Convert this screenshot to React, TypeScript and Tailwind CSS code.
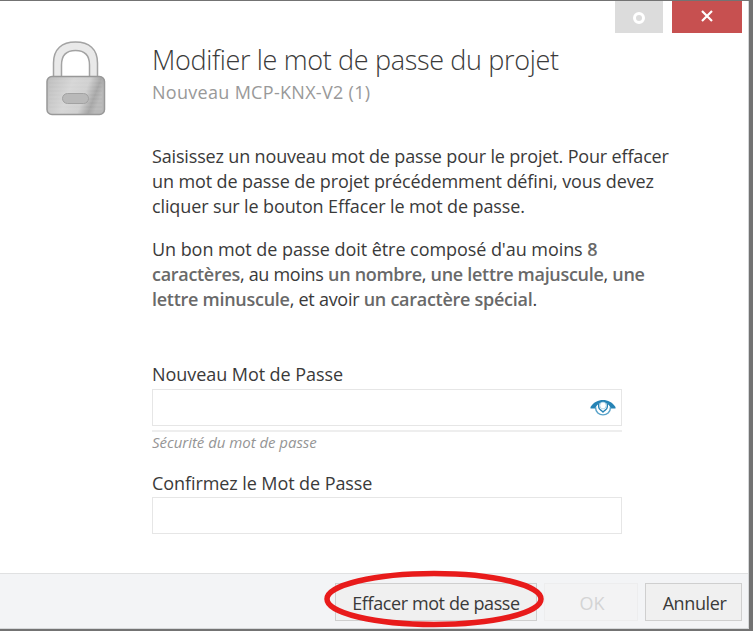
import type { ReactNode } from "react";

function Line({ className, children }: { className: string; children: ReactNode }) {
  return (
    <div className="whitespace-nowrap">
      <span className={className}>{children}</span>
    </div>
  );
}

function B({ children }: { children: ReactNode }) {
  return <span className="font-semibold text-[#696969]">{children}</span>;
}

function Padlock() {
  return (
    <svg width="62" height="78" viewBox="0 0 62 78" className="block">
      <defs>
        <linearGradient id="body" x1="0" y1="0" x2="1" y2="0.25">
          <stop offset="0" stopColor="#bcbcbc" />
          <stop offset="0.45" stopColor="#d6d6d6" />
          <stop offset="0.72" stopColor="#d0d0d0" />
          <stop offset="0.9" stopColor="#a6a6a6" />
          <stop offset="1" stopColor="#b8b8b8" />
        </linearGradient>
      </defs>
      <path
        d="M8.500 37V23C8.500 9 17 2 30.500 2S52.500 9 52.500 23V37H44.500V25C44.500 15 39 10.500 30.500 10.500S16.500 15 16.500 25V37Z"
        fill="#e9e9e9"
        stroke="#a3a3a3"
        strokeWidth="1.500"
      />
      <rect x="2" y="36.500" width="57.500" height="38" rx="5" fill="url(#body)" stroke="#989898" strokeWidth="1.500" />
      <path d="M4 41H57M4 45H57M4 49H57M4 53H57M4 57H57M4 61H57M4 65H57M4 69H57" stroke="#ffffff" strokeOpacity="0.12" />
      <rect x="17.500" y="53.500" width="26" height="10" rx="5" fill="#b9b9b9" stroke="#a2a2a2" />
    </svg>
  );
}

function Eye() {
  return (
    <svg width="26" height="17" viewBox="0 0 26 17" className="block">
      <path d="M0.500 9.500V8C4 3 8 1 13 1S22 3 25.500 8V9.500H20.500C20 7 18.500 5.500 17 5H9C7.500 5.500 6 7 5.500 9.500Z" fill="#2683b5" />
      <path d="M5.500 8C5.500 18.500 20.500 18.500 20.500 8" fill="none" stroke="#58a2c9" strokeWidth="1.400" />
      <path d="M8.700 4.500V8C8.700 10.500 11 11 13 13C15 11 17.300 10.500 17.300 8V4.500" fill="#fff" stroke="#2683b5" strokeWidth="1.400" />
      <ellipse cx="13" cy="6.500" rx="3.200" ry="3.400" fill="#fff" stroke="#a5cde2" strokeWidth="0.800" />
    </svg>
  );
}

export default function App() {
  return (
    <div className="h-[631px] w-[753px] overflow-hidden bg-[#737373] pt-px pr-1 pb-0.5 font-['Open_Sans','Noto_Sans',sans-serif] text-[#3a3a3a]">
      <div className="relative flex h-[628px] flex-col border-r border-b border-[#d5d7d9] bg-white">
        <div className="flex h-8 shrink-0 justify-end gap-[9px] pr-[6px]">
          <div className="flex w-12 items-center justify-center bg-[#dcdcdc]">
            <div className="mt-0.5 size-3 rounded-full border-3 border-white" />
          </div>
          <button className="flex w-[70px] items-center justify-center bg-[#c75050]">
            <svg width="12" height="12" viewBox="0 0 12 12" className="mb-0.5">
              <path d="M1 1L11 11M11 1L1 11" stroke="#fff" strokeWidth="2.200" />
            </svg>
          </button>
        </div>

        <div className="flex h-[540px] shrink-0 pl-[45px]">
          <div className="w-[107px] shrink-0 pt-[7px]">
            <Padlock />
          </div>
          <div className="w-[580px]">
            <h1 className="mt-[10px] h-[34px] text-[27px] leading-[34px] font-light">
              <Line className="tracking-[-0.340px]">Modifier le mot de passe du projet</Line>
            </h1>
            <div className="mt-[3px] h-6 text-[18px] leading-6 text-[#999]">
              <Line className="tracking-[0.300px]">Nouveau MCP-KNX-V2 (1)</Line>
            </div>
            <div className="mt-[40px] text-[18px] leading-[25px]">
              <Line className="tracking-[-0.160px]">Saisissez un nouveau mot de passe pour le projet. Pour effacer</Line>
              <Line className="tracking-[-0.110px]">un mot de passe de projet précédemment défini, vous devez</Line>
              <Line className="tracking-[-0.120px]">cliquer sur le bouton Effacer le mot de passe.</Line>
            </div>
            <div className="mt-[18px] text-[18px] leading-[25px]">
              <Line className="tracking-[-0.060px]">Un bon mot de passe doit être composé d'au moins <B>8</B></Line>
              <Line className="tracking-[-0.300px]"><B>caractères</B>, au moins <B>un nombre</B>, <B>une lettre majuscule</B>, <B>une</B></Line>
              <Line className="tracking-[-0.270px]"><B>lettre minuscule</B>, et avoir <B>un caractère spécial</B>.</Line>
            </div>
            <div className="mt-[50px] text-[18px] leading-[25px]">
              <Line className="tracking-[-0.060px]">Nouveau Mot de Passe</Line>
            </div>
            <div className="mt-[2px] flex h-[37px] w-[470px] items-center justify-end border border-[#e6e6e6] pr-[5px]">
              <Eye />
            </div>
            <div className="mt-[4px] h-0.5 w-[470px] bg-[#eee]" />
            <div className="text-[15px] leading-5 text-[#959595] italic">
              <Line className="tracking-[-0.040px]">Sécurité du mot de passe</Line>
            </div>
            <div className="mt-[19px] text-[18px] leading-[25px]">
              <Line className="tracking-[-0.080px]">Confirmez le Mot de Passe</Line>
            </div>
            <div className="mt-px h-[37px] w-[470px] border border-[#e6e6e6]" />
          </div>
        </div>

        <div className="flex flex-1 items-start justify-end border-t border-[#e0e1e2] bg-[#f3f4f6] pt-[9px] pr-[6px] text-[18px]">
          <button className="h-[38px] w-[202px] border border-[#cfcfcf] bg-[#f0f0f0] pt-0.5 leading-[35px] whitespace-nowrap">
            <span className="tracking-[-0.400px]">Effacer mot de passe</span>
          </button>
          <button className="ml-[7px] h-[38px] w-[94px] border border-[#ededee] bg-[#f3f3f4] pt-0.5 pl-0.5 leading-[35px] text-[#d4d4d4]">OK</button>
          <button className="ml-[7px] h-[38px] w-[97px] border border-[#cfcfcf] bg-[#f0f0f0] pt-0.5 pl-0.5 leading-[35px]">
            <span className="tracking-[-0.400px]">Annuler</span>
          </button>
        </div>

        <svg width="222" height="60" viewBox="0 0 222 60" className="pointer-events-none absolute top-[568px] left-[323px]">
          <ellipse cx="111" cy="30" rx="107" ry="25.500" fill="none" stroke="#e81b1b" strokeWidth="5.500" />
        </svg>
      </div>
    </div>
  );
}
